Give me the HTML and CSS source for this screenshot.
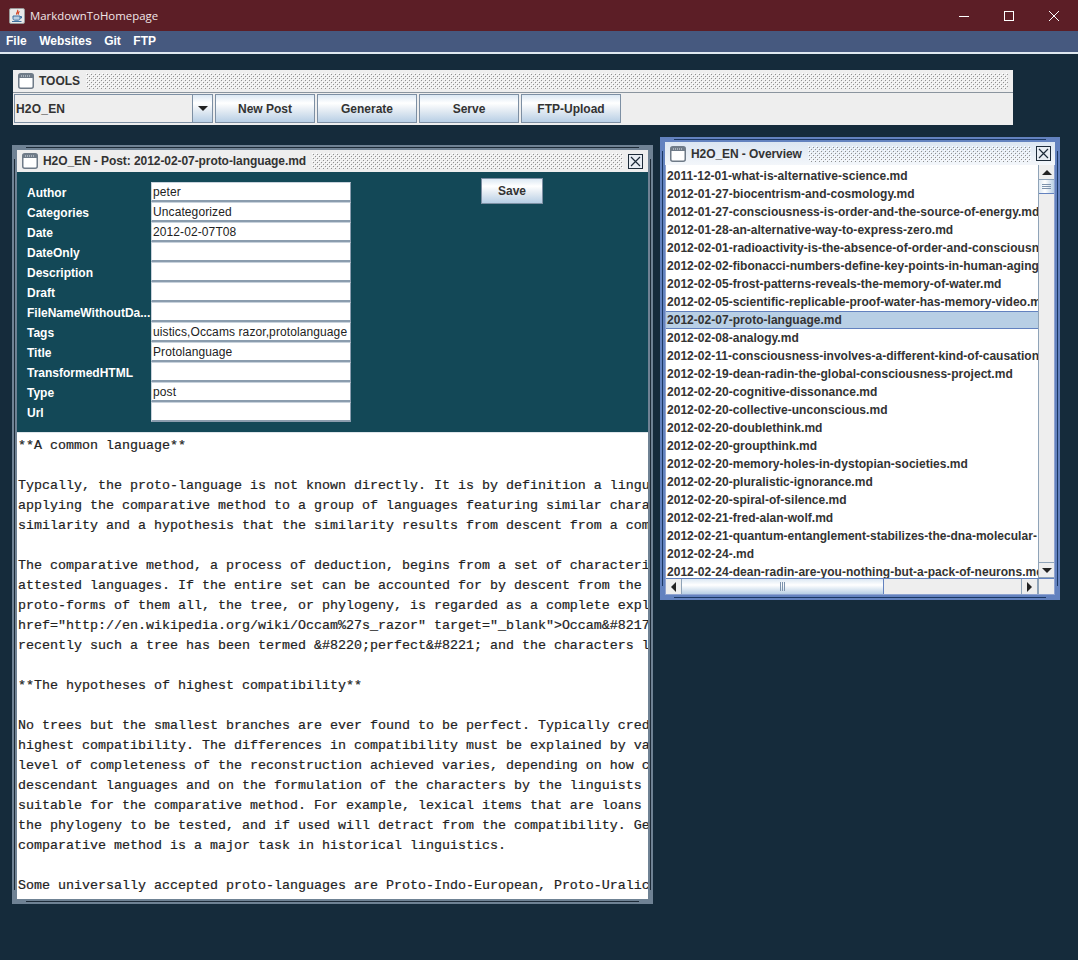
FILE: index.html

```html
<!DOCTYPE html>
<html lang="en">
<head>
  <meta charset="UTF-8">
  <title>MarkdownToHomepage</title>
  <link rel="stylesheet" href="styles.css">
</head>
<body>
  <svg class="defs" width="0" height="0">
    <defs>
      <pattern id="bump-dots" width="4" height="4" patternUnits="userSpaceOnUse">
        <rect x="0" y="0" width="1" height="1" fill="#ffffff" shape-rendering="crispEdges"/>
        <rect x="2" y="2" width="1" height="1" fill="#ffffff" shape-rendering="crispEdges"/>
        <rect x="1" y="1" width="1" height="1" fill="#8f8f8f" shape-rendering="crispEdges"/>
        <rect x="3" y="3" width="1" height="1" fill="#8f8f8f" shape-rendering="crispEdges"/>
      </pattern>
    </defs>
    <symbol id="frame-icon" viewBox="0 0 16 16">
      <rect x="0.75" y="0.75" width="14.5" height="14.5" rx="2" fill="#fff" stroke="#6f7b88" stroke-width="1.5"/>
      <rect x="1" y="1" width="14" height="4" fill="#6f7b88"/>
      <path d="M3 3h1M5 3h1M7 3h1M9 3h1M11 3h1" stroke="#dfe5ea" stroke-width="1"/>
    </symbol>
    <symbol id="close-icon" viewBox="0 0 15 15">
      <rect x="0.5" y="0.5" width="14" height="14" fill="#e8edf3" stroke="#1c2a38"/>
      <path d="M3 3l9 9M12 3l-9 9" stroke="#1c2a38" stroke-width="1.2" fill="none"/>
    </symbol>
  </svg>

  <div class="titlebar">
    <svg class="app-icon" width="16" height="16" viewBox="0 0 16 16">
      <rect x="0.5" y="0.5" width="15" height="15" rx="1.5" fill="#e9e9e9" stroke="#9a9a9a"/>
      <path d="M8.5 2c1.5 1.6-2 2.6-.6 4.6M10.5 3.5c-1.6 1-1.6 2-.8 3" stroke="#d2401f" stroke-width="1.2" fill="none"/>
      <path d="M4 8h7v2.5c0 1.2-1 1.7-2 1.7H6c-1 0-2-.5-2-1.7zM11 8.5h1.5v1.5H11M3 13.5h9.5" stroke="#3f6f9e" stroke-width="1" fill="#b9cde0"/>
    </svg>
    <span class="app-name">MarkdownToHomepage</span>
    <div class="win-controls">
      <svg width="12" height="12" viewBox="0 0 12 12"><path d="M1 6.5h10" stroke="#fff" fill="none"/></svg>
      <svg width="12" height="12" viewBox="0 0 12 12"><rect x="1.5" y="1.5" width="9" height="9" stroke="#fff" fill="none"/></svg>
      <svg width="12" height="12" viewBox="0 0 12 12"><path d="M1 1l10 10M11 1L1 11" stroke="#fff" fill="none"/></svg>
    </div>
  </div>

  <div class="menubar">
    <span>File</span>
    <span>Websites</span>
    <span>Git</span>
    <span>FTP</span>
  </div>

  <div class="desktop">

    <div class="toolbox">
      <div class="frame-title tools-title">
        <svg class="frame-icon" width="16" height="16"><use href="#frame-icon"/></svg>
        <span>TOOLS</span>
        <svg class="bumps"><rect width="100%" height="100%" fill="url(#bump-dots)"/></svg>
      </div>
      <div class="tool-row">
        <div class="combo">
          <div class="combo-value">H2O_EN</div>
          <div class="combo-arrow"><i class="arrow-down"></i></div>
        </div>
        <div class="btn tool-btn">New Post</div>
        <div class="btn tool-btn">Generate</div>
        <div class="btn tool-btn">Serve</div>
        <div class="btn tool-btn">FTP-Upload</div>
      </div>
    </div>

    <div class="frame post-frame">
      <div class="frame-title">
        <svg class="frame-icon" width="16" height="16"><use href="#frame-icon"/></svg>
        <span class="frame-name">H2O_EN - Post: 2012-02-07-proto-language.md</span>
        <svg class="bumps"><rect width="100%" height="100%" fill="url(#bump-dots)"/></svg>
        <svg class="close-icon" width="15" height="15"><use href="#close-icon"/></svg>
      </div>
      <div class="post-form">
        <div class="fields">
          <label>Author</label><div class="field">peter</div>
          <label>Categories</label><div class="field">Uncategorized</div>
          <label>Date</label><div class="field">2012-02-07T08</div>
          <label>DateOnly</label><div class="field"></div>
          <label>Description</label><div class="field"></div>
          <label>Draft</label><div class="field"></div>
          <label>FileNameWithoutDa...</label><div class="field"></div>
          <label>Tags</label><div class="field">uistics,Occams razor,protolanguage</div>
          <label>Title</label><div class="field">Protolanguage</div>
          <label>TransformedHTML</label><div class="field"></div>
          <label>Type</label><div class="field">post</div>
          <label>Url</label><div class="field"></div>
        </div>
        <div class="btn save-btn">Save</div>
      </div>
      <pre class="editor">**A common language**

Typcally, the proto-language is not known directly. It is by definition a lingu
applying the comparative method to a group of languages featuring similar chara
similarity and a hypothesis that the similarity results from descent from a com

The comparative method, a process of deduction, begins from a set of characteri
attested languages. If the entire set can be accounted for by descent from the
proto-forms of them all, the tree, or phylogeny, is regarded as a complete expl
href="http://en.wikipedia.org/wiki/Occam%27s_razor" target="_blank"&gt;Occam&amp;#8217
recently such a tree has been termed &amp;#8220;perfect&amp;#8221; and the characters l

**The hypotheses of highest compatibility**

No trees but the smallest branches are ever found to be perfect. Typically cred
highest compatibility. The differences in compatibility must be explained by va
level of completeness of the reconstruction achieved varies, depending on how c
descendant languages and on the formulation of the characters by the linguists
suitable for the comparative method. For example, lexical items that are loans
the phylogeny to be tested, and if used will detract from the compatibility. Ge
comparative method is a major task in historical linguistics.

Some universally accepted proto-languages are Proto-Indo-European, Proto-Uralic</pre>
    </div>

    <div class="frame overview-frame">
      <div class="frame-title overview-title">
        <svg class="frame-icon" width="16" height="16"><use href="#frame-icon"/></svg>
        <span class="frame-name">H2O_EN - Overview</span>
        <svg class="bumps"><rect width="100%" height="100%" fill="url(#bump-dots)"/></svg>
        <svg class="close-icon" width="15" height="15"><use href="#close-icon"/></svg>
      </div>
      <div class="scrollpane">
        <div class="list-row-wrap">
          <ul class="file-list">
            <li>2011-12-01-what-is-alternative-science.md</li>
            <li>2012-01-27-biocentrism-and-cosmology.md</li>
            <li>2012-01-27-consciousness-is-order-and-the-source-of-energy.md</li>
            <li>2012-01-28-an-alternative-way-to-express-zero.md</li>
            <li>2012-02-01-radioactivity-is-the-absence-of-order-and-consciousn</li>
            <li>2012-02-02-fibonacci-numbers-define-key-points-in-human-aging.</li>
            <li>2012-02-05-frost-patterns-reveals-the-memory-of-water.md</li>
            <li>2012-02-05-scientific-replicable-proof-water-has-memory-video.m</li>
            <li class="selected">2012-02-07-proto-language.md</li>
            <li>2012-02-08-analogy.md</li>
            <li>2012-02-11-consciousness-involves-a-different-kind-of-causation</li>
            <li>2012-02-19-dean-radin-the-global-consciousness-project.md</li>
            <li>2012-02-20-cognitive-dissonance.md</li>
            <li>2012-02-20-collective-unconscious.md</li>
            <li>2012-02-20-doublethink.md</li>
            <li>2012-02-20-groupthink.md</li>
            <li>2012-02-20-memory-holes-in-dystopian-societies.md</li>
            <li>2012-02-20-pluralistic-ignorance.md</li>
            <li>2012-02-20-spiral-of-silence.md</li>
            <li>2012-02-21-fred-alan-wolf.md</li>
            <li>2012-02-21-quantum-entanglement-stabilizes-the-dna-molecular-</li>
            <li>2012-02-24-.md</li>
            <li>2012-02-24-dean-radin-are-you-nothing-but-a-pack-of-neurons.md</li>
          </ul>
          <div class="vscroll">
            <div class="sb-btn sb-btn-v"><i class="arrow-up"></i></div>
            <div class="vthumb"><i></i><i></i><i></i></div>
            <div class="vtrack"></div>
            <div class="sb-btn sb-btn-v"><i class="arrow-down"></i></div>
          </div>
        </div>
        <div class="hscroll">
          <div class="sb-btn sb-btn-h"><i class="arrow-left"></i></div>
          <div class="hthumb"><i></i><i></i><i></i></div>
          <div class="htrack"></div>
          <div class="sb-btn sb-btn-h"><i class="arrow-right"></i></div>
          <div class="sb-corner"></div>
        </div>
      </div>
    </div>

  </div>
</body>
</html>
```

FILE: styles.css

```css
* {
  box-sizing: border-box;
}
html, body {
  margin: 0;
  height: 100%;
}
body {
  display: flex;
  flex-direction: column;
  height: 960px;
  overflow: hidden;
  background: #152b3b;
  font-family: "Liberation Sans", Arial, sans-serif;
  font-size: 12px;
  color: #222;
}
.defs {
  position: absolute;
}

/* native window */
.titlebar {
  flex: none;
  height: 31px;
  display: flex;
  align-items: center;
  padding-left: 9px;
  background: #5c1e26;
  color: #fff;
}
.app-icon {
  margin-right: 5px;
}
.app-name {
  font-family: "Open Sans", "Liberation Sans", sans-serif;
  font-size: 11.4px;
  color: #f1e6e8;
}
.win-controls {
  margin-left: auto;
  display: flex;
  gap: 33px;
  padding-right: 18px;
}
.menubar {
  flex: none;
  height: 23px;
  display: flex;
  align-items: center;
  gap: 12.5px;
  padding: 0 0 2px 6px;
  background: #46597f;
  border-bottom: 2px solid #dfe8ef;
  color: #fff;
  font-weight: bold;
}
.desktop {
  position: relative;
  flex: 1;
  background: #152b3b;
}

/* internal frames */
.toolbox {
  position: absolute;
  left: 13px;
  top: 16px;
  width: 1000px;
  height: 55px;
  background: #eeeeee;
}
.frame {
  position: absolute;
  display: flex;
  flex-direction: column;
  padding: 5px;
  background-color: var(--band);
  background-image:
    linear-gradient(var(--line), var(--line)),
    linear-gradient(var(--line), var(--line)),
    linear-gradient(var(--line), var(--line)),
    linear-gradient(var(--line), var(--line));
  background-repeat: no-repeat;
  background-size:
    calc(100% - 28px) 1px,
    calc(100% - 28px) 1px,
    1px calc(100% - 28px),
    1px calc(100% - 28px);
  background-position:
    14px 2px,
    14px calc(100% - 2px),
    2px 14px,
    calc(100% - 2px) 14px;
}
.post-frame {
  --band: #6f8294;
  --line: #1d2b38;
  left: 12px;
  top: 91px;
  width: 641px;
  height: 759px;
}
.overview-frame {
  --band: #6382bf;
  --line: #1b3763;
  left: 660px;
  top: 83px;
  width: 400px;
  height: 463px;
}
.frame-title {
  flex: none;
  height: 22px;
  display: flex;
  align-items: center;
  padding: 0 5px;
  background: #eeeeee;
  font-weight: bold;
  color: #333;
}
.tools-title {
  height: 23px;
  border-bottom: 1px solid #8a949e;
}
.overview-title {
  height: 23px;
  padding-right: 4px;
  background: linear-gradient(#dce6f2, #f3f6fa);
}
.frame-name {
  letter-spacing: -0.07px;
}
.frame-icon {
  flex: none;
  margin-right: 5px;
}
.bumps {
  flex: 1;
  min-width: 0;
  height: 16px;
  margin-left: 6px;
}
.close-icon {
  flex: none;
  margin-left: 5px;
}

/* toolbar row */
.tool-row {
  display: flex;
  gap: 2px;
  height: 30px;
  padding: 1px 0 0 1px;
}
.combo {
  display: flex;
  width: 199px;
  height: 29px;
  border: 1px solid #7d8fa3;
}
.combo-value {
  flex: 1;
  display: flex;
  align-items: center;
  padding-left: 1px;
  border-right: 1px solid #7d8fa3;
  background: #eeeeee;
  font-weight: bold;
  letter-spacing: 0.2px;
  color: #333;
}
.combo-arrow {
  width: 19px;
  display: flex;
  align-items: center;
  justify-content: center;
  background: linear-gradient(#dce8f3, #ffffff 30%, #e6edf4 55%, #b8cfe5);
}
.btn {
  display: flex;
  align-items: center;
  justify-content: center;
  border: 1px solid #7d8fa3;
  background: linear-gradient(#dce8f3, #ffffff 30%, #e6edf4 55%, #b8cfe5);
  font-weight: bold;
  color: #333;
}
.tool-btn {
  width: 100px;
  height: 29px;
}
.arrow-down, .arrow-up, .arrow-left, .arrow-right {
  display: block;
  width: 0;
  height: 0;
  border-style: solid;
  border-color: transparent;
}
.arrow-down {
  border-width: 5px 5px 0;
  border-top-color: #222;
}
.arrow-up {
  border-width: 0 5px 5px;
  border-bottom-color: #222;
}
.arrow-left {
  border-width: 5px 5px 5px 0;
  border-right-color: #222;
}
.arrow-right {
  border-width: 5px 0 5px 5px;
  border-left-color: #222;
}

/* post form */
.post-form {
  flex: none;
  height: 261px;
  display: flex;
  align-items: flex-start;
  padding: 10px 0 0 10px;
  background: #134857;
  border-bottom: 1px solid #dfe5ea;
}
.fields {
  display: grid;
  grid-template-columns: 124px 200px;
  grid-auto-rows: 20px;
}
.fields label {
  display: flex;
  align-items: center;
  padding-top: 2px;
  color: #fff;
  font-weight: bold;
  white-space: nowrap;
}
.field {
  padding: 2px 0 0 1px;
  border-style: solid;
  border-width: 1px 1px 2px 1px;
  border-color: #c8d2dc #8b9dae #8b9dae #c8d2dc;
  background: #fff;
  line-height: 15px;
  letter-spacing: 0.1px;
  color: #222;
  overflow: hidden;
  white-space: nowrap;
}
.save-btn {
  width: 62px;
  height: 26px;
  margin: -4px 0 0 130px;
}
.editor {
  flex: 1;
  margin: 0;
  padding: 3px 0 0 1px;
  overflow: hidden;
  background: #fff;
  font-family: "Liberation Mono", "Courier New", monospace;
  font-size: 13.33px;
  line-height: 20px;
  color: #222;
  -webkit-text-stroke: 0.2px #222;
}

/* overview */
.scrollpane {
  flex: 1;
  display: flex;
  flex-direction: column;
  min-height: 0;
  border: 1px solid #8fa3d0;
  border-top: 0;
  background: #fff;
}
.list-row-wrap {
  flex: 1;
  display: flex;
  min-height: 0;
}
.file-list {
  flex: 1;
  min-width: 0;
  margin: 0;
  padding: 2px 0 0;
  list-style: none;
  overflow: hidden;
  background: #fff;
}
.file-list li {
  height: 18px;
  line-height: 18px;
  padding-left: 1px;
  white-space: nowrap;
  font-weight: bold;
  letter-spacing: 0.03px;
  color: #333;
}
.file-list .selected {
  background: #b8cfe5;
  border: 1px solid #6382bf;
  border-width: 1px 0;
  line-height: 16px;
}
.vscroll {
  flex: none;
  width: 16px;
  display: flex;
  flex-direction: column;
  background: #eeeeee;
  border-left: 1px solid #8fa3b8;
}
.sb-btn {
  flex: none;
  display: flex;
  align-items: center;
  justify-content: center;
  background: #eeeeee;
}
.sb-btn-v {
  height: 15px;
  border-bottom: 1px solid #8fa3b8;
}
.vtrack, .htrack {
  flex: 1;
}
.vtrack {
  border-bottom: 1px solid #8fa3b8;
}
.vthumb {
  flex: none;
  height: 14px;
  display: flex;
  flex-direction: column;
  align-items: center;
  justify-content: center;
  gap: 1px;
  background: linear-gradient(90deg, #dce8f3, #fff 40%, #b8cfe5);
  border-bottom: 1px solid #6382bf;
}
.vthumb i {
  display: block;
  width: 9px;
  height: 1px;
  background: #7d93ad;
}
.hscroll {
  flex: none;
  height: 16px;
  display: flex;
  background: #eeeeee;
  border-top: 1px solid #6382bf;
}
.sb-btn-h {
  width: 16px;
  border-right: 1px solid #8fa3b8;
}
.hthumb {
  flex: none;
  width: 202px;
  display: flex;
  align-items: center;
  justify-content: center;
  gap: 1px;
  background: linear-gradient(#dce8f3, #fff 40%, #b8cfe5);
  border-right: 1px solid #6382bf;
}
.hthumb i {
  display: block;
  width: 1px;
  height: 9px;
  background: #7d93ad;
}
.htrack {
  border-right: 1px solid #8fa3b8;
}
.sb-corner {
  flex: none;
  width: 16px;
  background: #eeeeee;
  border-left: 1px solid #8fa3b8;
}
```
